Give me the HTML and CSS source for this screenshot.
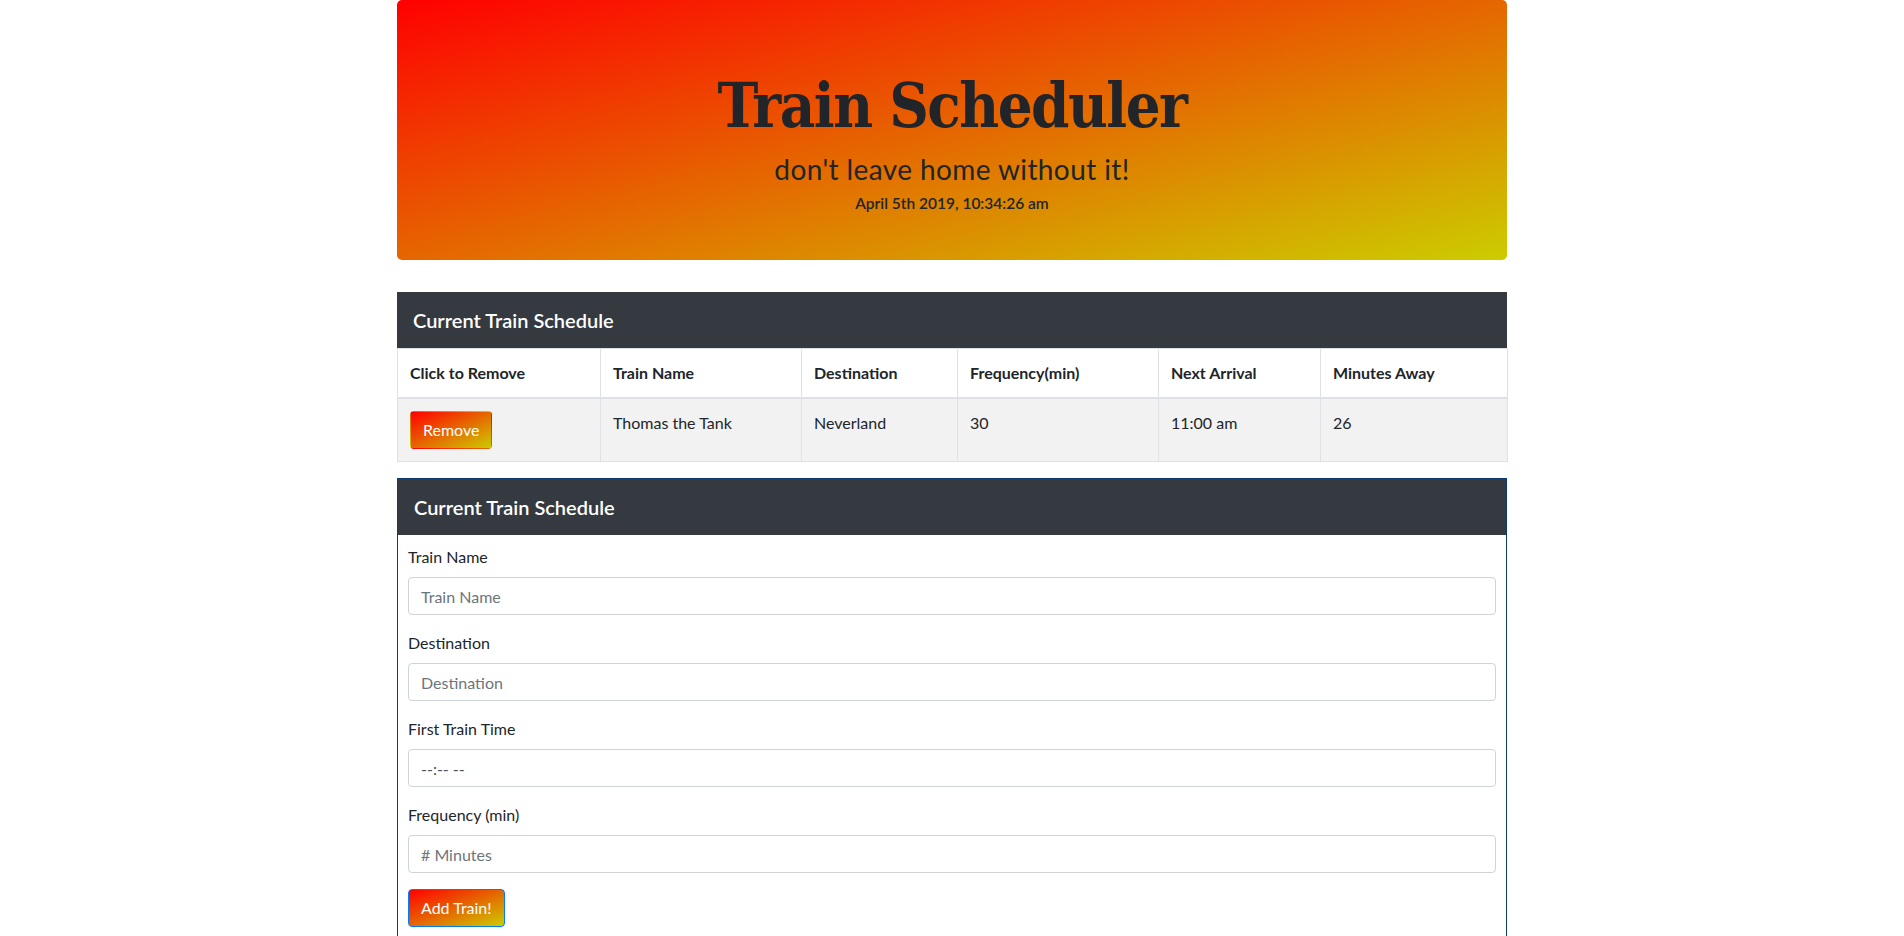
FILE: index.html
```html
<!DOCTYPE html>
<html lang="en">
<head>
<meta charset="utf-8">
<title>Train Scheduler</title>
<link rel="stylesheet" href="styles.css">
</head>
<body>
<div class="container">
  <header class="jumbotron">
    <h1 class="title">Train Scheduler</h1>
    <h3 class="tagline">don't leave home without it!</h3>
    <h6 class="clock">April 5th 2019, 10:34:26 am</h6>
  </header>

  <section class="card card-schedule">
    <div class="card-header">Current Train Schedule</div>
    <table class="table">
      <colgroup>
        <col class="col-remove">
        <col class="col-name">
        <col class="col-dest">
        <col class="col-freq">
        <col class="col-next">
        <col class="col-away">
      </colgroup>
      <thead>
        <tr>
          <th>Click to Remove</th>
          <th>Train Name</th>
          <th>Destination</th>
          <th>Frequency(min)</th>
          <th>Next Arrival</th>
          <th>Minutes Away</th>
        </tr>
      </thead>
      <tbody>
        <tr class="row-striped">
          <td><button class="btn btn-gradient" type="button">Remove</button></td>
          <td>Thomas the Tank</td>
          <td>Neverland</td>
          <td>30</td>
          <td>11:00 am</td>
          <td>26</td>
        </tr>
      </tbody>
    </table>
  </section>

  <section class="card card-form">
    <div class="card-header">Current Train Schedule</div>
    <form class="card-body">
      <div class="form-group">
        <label class="form-label" for="train-name">Train Name</label>
        <input class="form-control" id="train-name" type="text" placeholder="Train Name">
      </div>
      <div class="form-group">
        <label class="form-label" for="destination">Destination</label>
        <input class="form-control" id="destination" type="text" placeholder="Destination">
      </div>
      <div class="form-group">
        <label class="form-label" for="first-time">First Train Time</label>
        <input class="form-control time-control" id="first-time" type="text" placeholder="--:-- --">
      </div>
      <div class="form-group">
        <label class="form-label" for="frequency">Frequency (min)</label>
        <input class="form-control" id="frequency" type="text" placeholder="# Minutes">
      </div>
      <button class="btn btn-gradient btn-add" type="button">Add Train!</button>
    </form>
  </section>
</div>
</body>
</html>
```

FILE: styles.css
```css
* {
  box-sizing: border-box;
}

html, body {
  margin: 0;
  padding: 0;
}

body {
  background: #fff;
  color: #212529;
  font-family: Lato, "Open Sans", "Noto Sans", sans-serif;
  font-size: 16px;
  line-height: 1.5;
}

.container {
  width: 1110px;
  margin: 0 auto;
}

/* ---------- Jumbotron ---------- */
.jumbotron {
  height: 260px;
  padding: 69px 32px 0;
  margin-bottom: 32px;
  border-radius: 5px;
  background: linear-gradient(to bottom right, #ff0000, #cccc00);
  text-align: center;
  display: flex;
  flex-direction: column;
  align-items: center;
}

.title {
  margin: 0;
  font-family: "DejaVu Serif Condensed", "DejaVu Serif", serif;
  font-stretch: condensed;
  font-weight: 700;
  font-size: 61px;
  letter-spacing: -1.5px;
  line-height: 1.2;
  color: #212529;
}

.tagline {
  margin: 11px 0 0;
  font-size: 28px;
  font-weight: 400;
  letter-spacing: 0.4px;
  line-height: 1.2;
  color: #212529;
}

.clock {
  margin: 7px 0 0;
  font-size: 15.5px;
  font-weight: 600;
  line-height: 1.2;
  color: #212529;
}

/* ---------- Cards ---------- */
.card-header {
  background: #343a40;
  color: #fff;
  padding: 16px 16px;
  font-size: 20px;
  line-height: 24px;
  font-weight: 600;
}

.card-form {
  margin-top: 16px;
  border: 1px solid #0b3b70;
}

.card-body {
  padding: 10px;
}

/* ---------- Table ---------- */
.table {
  width: 100%;
  border-collapse: collapse;
  table-layout: fixed;
}

.col-remove { width: 203px; }
.col-name { width: 201px; }
.col-dest { width: 156px; }
.col-freq { width: 201px; }
.col-next { width: 162px; }
.col-away { width: 187px; }

.table th,
.table td {
  padding: 12px;
  border: 1px solid #dee2e6;
  text-align: left;
  vertical-align: top;
}

.table th {
  font-weight: 700;
}

.table thead th {
  border-bottom: 2px solid #dee2e6;
}

.row-striped {
  background: #f2f2f2;
}

/* ---------- Buttons ---------- */
.btn {
  font-family: inherit;
  font-size: 16px;
  line-height: 24px;
  padding: 6px 12px;
  border-radius: 4px;
  cursor: pointer;
}

.btn-gradient {
  color: #fff;
  border: 1px solid transparent;
  background: linear-gradient(to bottom right, #ff0000, #cccc00);
}

.btn-add {
  border-color: #007bff;
}

/* ---------- Form ---------- */
.form-group {
  margin-bottom: 16px;
}

.form-label {
  display: block;
  margin-bottom: 8px;
}

.form-control {
  display: block;
  width: 100%;
  height: 38px;
  padding: 6px 12px;
  font-family: inherit;
  font-size: 16px;
  line-height: 24px;
  color: #495057;
  background: #fff;
  border: 1px solid #ced4da;
  border-radius: 4px;
}

.form-control::placeholder {
  color: #6c757d;
  opacity: 1;
}

.time-control::placeholder {
  color: #495057;
}
```
